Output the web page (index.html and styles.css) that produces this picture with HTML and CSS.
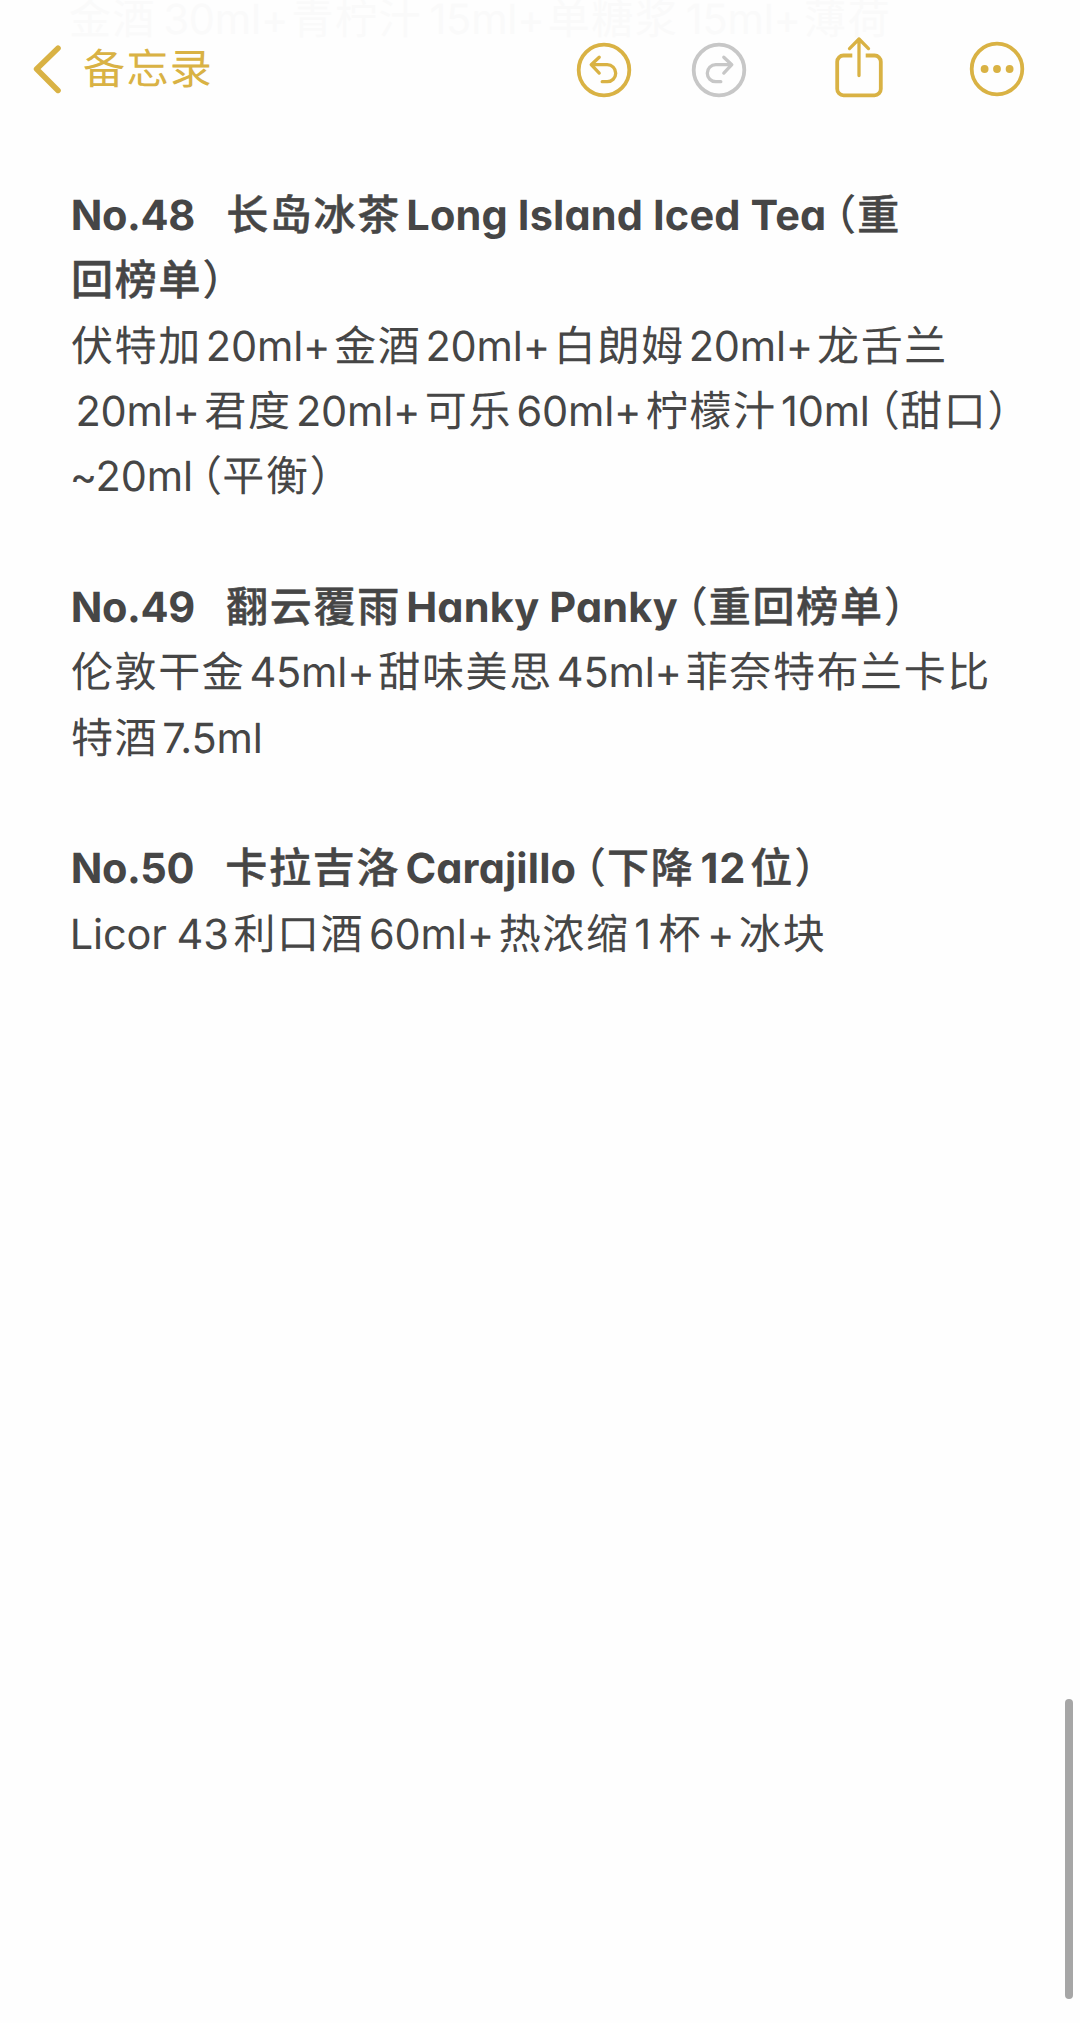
FILE: index.html
```html
<!DOCTYPE html>
<html lang="zh-CN">
<head>
<meta charset="utf-8">
<title>备忘录</title>
<link rel="stylesheet" href="styles.css">
</head>
<body>
<header class="bar">
  <div class="line under"><span class="zh">金酒</span><span class="en">30ml+</span><span class="zh">青柠汁</span><span class="en">15ml+</span><span class="zh">单糖浆</span><span class="en">15ml+</span><span class="zh">薄荷</span></div>
  <a class="back">
    <svg class="chevron" viewBox="0 0 28 50"><path d="M25 4.2 3.6 25 25 46.4"/></svg>
    <span class="back-label">备忘录</span>
  </a>
  <div class="tools">
    <svg class="icon undo" viewBox="0 0 56 56"><circle cx="28" cy="28" r="25.3"/><path class="thin" d="M23.2 15.2 15.2 22.7l8 8.4M16 22.7h15.2a8.5 8.5 0 0 1 0 17H26.2"/></svg>
    <svg class="icon redo" viewBox="0 0 56 56"><circle cx="28" cy="28" r="25.3"/><path class="thin" d="M32.8 15.2 40.8 22.7l-8 8.4M40 22.7H24.8a8.5 8.5 0 0 0 0 17H29.8"/></svg>
    <svg class="icon share" viewBox="0 0 50 64"><path d="M18.3 21.5H9.5a6.3 6.3 0 0 0-6.3 6.3V55a6.3 6.3 0 0 0 6.3 6.3h31a6.3 6.3 0 0 0 6.3-6.3V27.8a6.3 6.3 0 0 0-6.3-6.3h-8.8" class="box"/><path class="thin" d="M25 41.5V5M15.5 14.6 25 5l9.5 9.6"/></svg>
    <svg class="icon more" viewBox="0 0 56 56"><circle cx="28" cy="28" r="25.3"/><g class="dots"><circle cx="15.6" cy="28" r="3.9"/><circle cx="28" cy="28" r="3.9"/><circle cx="40.6" cy="28" r="3.9"/></g></svg>
  </div>
</header>
<main class="note">
  <section class="entry">
    <h2 class="line"><span class="en no">No.48</span><span class="zh name">长岛冰茶</span><span class="en">Long Island Iced Tea</span><span class="open">（</span><span class="zh">重</span></h2>
    <h2 class="line"><span class="zh">回榜单</span><span class="close">）</span></h2>
    <p class="line"><span class="zh">伏特加</span><span class="en">20ml+</span><span class="zh">金酒</span><span class="en">20ml+</span><span class="zh">白朗姆</span><span class="en">20ml+</span><span class="zh">龙舌兰</span></p>
    <p class="line indent"><span class="en">20ml+</span><span class="zh">君度</span><span class="en">20ml+</span><span class="zh">可乐</span><span class="en">60ml+</span><span class="zh">柠檬汁</span><span class="en">10ml</span><span class="open">（</span><span class="zh">甜口</span><span class="close">）</span></p>
    <p class="line outdent"><span class="en">~20ml</span><span class="open">（</span><span class="zh">平衡</span><span class="close">）</span></p>
  </section>
  <section class="entry">
    <h2 class="line"><span class="en no">No.49</span><span class="zh name">翻云覆雨</span><span class="en">Hanky Panky</span><span class="open">（</span><span class="zh">重回榜单</span><span class="close">）</span></h2>
    <p class="line"><span class="zh">伦敦干金</span><span class="en">45ml+</span><span class="zh">甜味美思</span><span class="en">45ml+</span><span class="zh">菲奈特布兰卡比</span></p>
    <p class="line"><span class="zh">特酒</span><span class="en">7.5ml</span></p>
  </section>
  <section class="entry">
    <h2 class="line"><span class="en no">No.50</span><span class="zh name">卡拉吉洛</span><span class="en">Carajillo</span><span class="open">（</span><span class="zh">下降</span><span class="en num">12</span><span class="zh">位</span><span class="close">）</span></h2>
    <p class="line outdent loose"><span class="en licor">Licor 43</span><span class="zh">利口酒</span><span class="en">60ml+</span><span class="zh">热浓缩</span><span class="en one">1</span><span class="zh">杯</span><span class="en">+</span><span class="zh">冰块</span></p>
  </section>
</main>
<div class="scrollbar"></div>
</body>
</html>
```
FILE: styles.css
```css
* { box-sizing: border-box; margin: 0; padding: 0; }

body {
  min-height: 2023px;
  background: #fefefe;
  color: #464646;
  font-family: Inter, "Noto Sans CJK SC", sans-serif;
  font-size: 41.5px;
  font-feature-settings: "cv11";
  text-rendering: geometricPrecision;
  overflow: hidden;
}

/* Navigation bar */
.bar {
  position: relative;
  display: flex;
  justify-content: space-between;
  height: 183px;
  padding: 0 55px 0 33px;
}

/* Note text that has scrolled beneath the bar */
.line.under {
  position: absolute;
  top: -13px;
  left: 69px;
  color: #fafafa;
}
.under .en { margin-left: 7.2px; }
.under .zh { margin-left: 3.2px; }

.back {
  position: relative;
  display: flex;
  align-items: center;
  height: 138px;
  color: #d9b244;
}

.chevron {
  width: 28px;
  height: 50px;
  fill: none;
  stroke: currentColor;
  stroke-width: 5.6;
  stroke-linecap: round;
  stroke-linejoin: round;
}

.back-label {
  margin-left: 22px;
  padding-top: 1px;
  font-size: 42px;
  line-height: 56px;
  letter-spacing: 1.4px;
}

.tools { position: relative; display: flex; color: #d9b244; }

.icon {
  width: 56px;
  height: 56px;
  margin-top: 42px;
  fill: none;
  stroke: currentColor;
  stroke-width: 3.8;
  stroke-linecap: round;
  stroke-linejoin: round;
}

.thin { stroke-width: 3.3; }
.redo { margin-left: 58.7px; color: #c7c7c7; }
.share { width: 50px; height: 64px; margin: 34px 0 0 87.5px; }
.box { stroke-linecap: butt; }
.more { margin: 41.3px 0 0 85px; }
.dots { fill: currentColor; stroke: none; }

/* Note body */
.note { padding-left: 71px; }
.entry { margin-bottom: 65.33px; }

.line {
  display: flex;
  align-items: baseline;
  height: 65.33px;
  font-size: 41.5px;
  font-weight: 400;
  line-height: 65.33px;
  white-space: pre;
}

.en { margin-left: 4px; letter-spacing: -0.17px; }
.zh { margin-left: 3.9px; font-size: 42px; letter-spacing: 1.6px; }
.line > :first-child { margin-left: 0; }
.open, .close { font-size: 42px; font-feature-settings: "halt"; }
.open { margin-left: 8.2px; }
.line .open + .zh { margin-left: 0.3px; }
.close { margin-left: 0.2px; }

.indent .en, .indent .zh { margin-left: 4.4px; }
.indent .open { margin-left: 9px; }
.outdent { margin-left: -1.3px; }
.loose .en, .loose .zh { margin-left: 4.8px; }
.loose .licor { margin-left: 0; letter-spacing: -0.17px; word-spacing: -1.6px; }
.loose .one + .zh { margin-left: 7.5px; }

h2.line .en { margin-left: 5.3px; font-weight: 700; letter-spacing: 0.15px; }
h2.line .zh { font-weight: 500; letter-spacing: 1.7px; -webkit-text-stroke: 0.5px currentColor; }
h2.line .open, h2.line .close { font-weight: 500; }
h2.line .open { margin-left: 8.8px; }
h2.line .open + .zh { margin-left: 1px; }
h2.line .no { margin-left: -0.3px; letter-spacing: -0.35px; }
h2.line .name { margin-left: 31.2px; }
h2.line .num { margin-left: 6px; letter-spacing: 1px; }

.scrollbar {
  position: absolute;
  top: 1699px;
  left: 1065px;
  width: 7.5px;
  height: 300px;
  border-radius: 4px;
  background: #a6a6a6;
}
```
